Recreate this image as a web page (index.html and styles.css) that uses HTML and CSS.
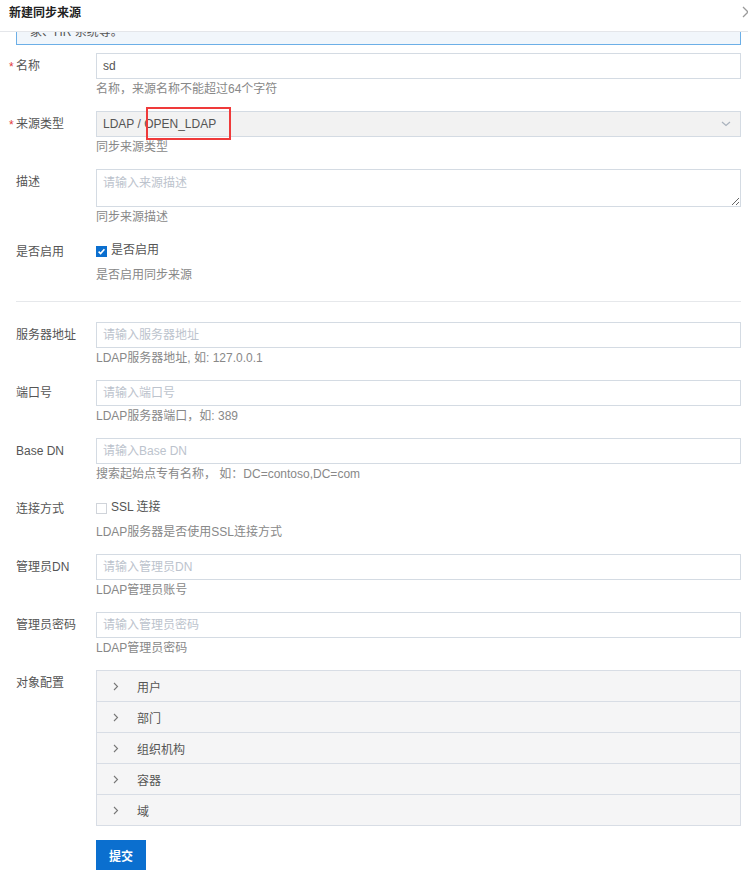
FILE: index.html
```html
<!DOCTYPE html>
<html lang="zh">
<head>
<meta charset="utf-8">
<title>新建同步来源</title>
<link rel="stylesheet" href="styles.css">
</head>
<body>
<div class="dialog">
  <div class="dialog-header">
    <span class="dialog-title">新建同步来源</span>
    <svg class="close-icon" width="8" height="12" viewBox="0 0 8 12"><path d="M1 1 L6 6 L1 11" fill="none" stroke="#9a9a9a" stroke-width="1.3"/></svg>
  </div>
  <div class="dialog-body">
    <div class="alert">同步来源用于从外部目录同步用户、部门等数据，例如 LDAP、Active Directory、钉钉、企业微信、飞书以及自建身份系统、OA 系统、国<br>家、HR 系统等。</div>

    <div class="row">
      <div class="label required">名称</div>
      <div class="field">
        <div class="input">sd</div>
        <div class="help">名称，来源名称不能超过64个字符</div>
      </div>
    </div>

    <div class="row">
      <div class="label required">来源类型</div>
      <div class="field">
        <div class="select">
          <span>LDAP / OPEN_LDAP</span>
          <svg class="select-arrow" width="10" height="6" viewBox="0 0 10 6"><path d="M1 1 L5 4.5 L9 1" fill="none" stroke="#a9b2bd" stroke-width="1.2"/></svg>
          <div class="highlight"></div>
        </div>
        <div class="help">同步来源类型</div>
      </div>
    </div>

    <div class="row">
      <div class="label">描述</div>
      <div class="field">
        <textarea class="textarea" placeholder="请输入来源描述"></textarea>
        <div class="help">同步来源描述</div>
      </div>
    </div>

    <div class="row">
      <div class="label">是否启用</div>
      <div class="field">
        <div class="check-line">
          <span class="checkbox checked"><svg width="11" height="11" viewBox="0 0 11 11"><path d="M2.6 5.6 L4.6 7.6 L8.4 3.2" fill="none" stroke="#fff" stroke-width="1.6"/></svg></span>
          <span class="check-text">是否启用</span>
        </div>
        <div class="help">是否启用同步来源</div>
      </div>
    </div>

    <div class="divider"></div>

    <div class="row">
      <div class="label">服务器地址</div>
      <div class="field">
        <div class="input placeholder">请输入服务器地址</div>
        <div class="help">LDAP服务器地址, 如: 127.0.0.1</div>
      </div>
    </div>

    <div class="row">
      <div class="label">端口号</div>
      <div class="field">
        <div class="input placeholder">请输入端口号</div>
        <div class="help">LDAP服务器端口，如: 389</div>
      </div>
    </div>

    <div class="row">
      <div class="label">Base DN</div>
      <div class="field">
        <div class="input placeholder">请输入Base DN</div>
        <div class="help">搜索起始点专有名称， 如：DC=contoso,DC=com</div>
      </div>
    </div>

    <div class="row">
      <div class="label">连接方式</div>
      <div class="field">
        <div class="check-line">
          <span class="checkbox"></span>
          <span class="check-text">SSL 连接</span>
        </div>
        <div class="help">LDAP服务器是否使用SSL连接方式</div>
      </div>
    </div>

    <div class="row">
      <div class="label">管理员DN</div>
      <div class="field">
        <div class="input placeholder">请输入管理员DN</div>
        <div class="help">LDAP管理员账号</div>
      </div>
    </div>

    <div class="row">
      <div class="label">管理员密码</div>
      <div class="field">
        <div class="input placeholder">请输入管理员密码</div>
        <div class="help">LDAP管理员密码</div>
      </div>
    </div>

    <div class="row">
      <div class="label">对象配置</div>
      <div class="field">
        <div class="collapse">
          <div class="collapse-item"><svg class="arrow" width="6" height="9" viewBox="0 0 6 9"><path d="M1 1 L4.5 4.5 L1 8" fill="none" stroke="#777" stroke-width="1.1"/></svg><span>用户</span></div>
          <div class="collapse-item"><svg class="arrow" width="6" height="9" viewBox="0 0 6 9"><path d="M1 1 L4.5 4.5 L1 8" fill="none" stroke="#777" stroke-width="1.1"/></svg><span>部门</span></div>
          <div class="collapse-item"><svg class="arrow" width="6" height="9" viewBox="0 0 6 9"><path d="M1 1 L4.5 4.5 L1 8" fill="none" stroke="#777" stroke-width="1.1"/></svg><span>组织机构</span></div>
          <div class="collapse-item"><svg class="arrow" width="6" height="9" viewBox="0 0 6 9"><path d="M1 1 L4.5 4.5 L1 8" fill="none" stroke="#777" stroke-width="1.1"/></svg><span>容器</span></div>
          <div class="collapse-item"><svg class="arrow" width="6" height="9" viewBox="0 0 6 9"><path d="M1 1 L4.5 4.5 L1 8" fill="none" stroke="#777" stroke-width="1.1"/></svg><span>域</span></div>
        </div>
      </div>
    </div>

    <div class="actions">
      <button class="btn-primary">提交</button>
    </div>
  </div>
</div>
</body>
</html>
```

FILE: styles.css
```css
* { box-sizing: border-box; }

html, body {
  margin: 0;
  padding: 0;
  background: #fff;
  font-family: "Liberation Sans", "Noto Sans CJK SC", sans-serif;
  font-size: 12px;
  color: #555;
}

.dialog {
  width: 748px;
  height: 872px;
  overflow: hidden;
  display: flex;
  flex-direction: column;
}

.dialog-header {
  height: 32px;
  flex: none;
  border-bottom: 1px solid #e4e6ea;
  display: flex;
  align-items: flex-start;
  justify-content: space-between;
  padding: 5px 0 0 9px;
  position: relative;
  z-index: 1;
  background: #fff;
}

.dialog-title {
  font-weight: bold;
  color: #222;
  font-size: 12px;
  line-height: 16px;
}

.close-icon {
  margin-top: 1px;
  margin-right: -2px;
}

.dialog-body {
  flex: 1;
  overflow: hidden;
  padding: 0 7px 0 16px;
}

.alert {
  margin-top: -32px;
  margin-bottom: 8px;
  border: 1px solid #6cafe7;
  background: #f1f6fb;
  padding: 4px 13px 3px;
  line-height: 18px;
  color: #555;
  white-space: nowrap;
  overflow: hidden;
}

.row {
  display: grid;
  grid-template-columns: 80px 1fr;
  margin-bottom: 14px;
}

.label {
  line-height: 26px;
  color: #555;
  position: relative;
}

.label.required::before {
  content: "*";
  color: #e23b3b;
  position: absolute;
  left: -7px;
  top: 1px;
  font-size: 12px;
}

.field {
  min-width: 0;
}

.input {
  height: 26px;
  border: 1px solid #d4dbe3;
  padding: 0 6px;
  line-height: 24px;
  color: #555;
  background: #fff;
}

.input.placeholder {
  color: #bcc3cd;
}

.select {
  position: relative;
  height: 26px;
  border: 1px solid #d4dbe3;
  background: #f2f2f2;
  padding: 0 6px;
  line-height: 24px;
  color: #555;
  display: flex;
  align-items: center;
  justify-content: space-between;
}

.select-arrow {
  margin-right: 3px;
}

.highlight {
  position: absolute;
  left: 49px;
  top: -5px;
  width: 85px;
  height: 33px;
  border: 2px solid #ef3a3a;
}

.textarea {
  display: block;
  width: 100%;
  height: 38px;
  border: 1px solid #d4dbe3;
  padding: 5px 6px;
  margin: 0;
  font-family: inherit;
  font-size: 12px;
  line-height: 16px;
  color: #555;
  resize: vertical;
  outline: none;
}

.textarea::placeholder {
  color: #bcc3cd;
}

.help {
  line-height: 18px;
  color: #888;
  padding-top: 1px;
  margin-bottom: -1px;
}

.check-line {
  height: 26px;
  display: flex;
  align-items: center;
}

.checkbox {
  width: 11px;
  height: 11px;
  border: 1px solid #d0d4da;
  background: #fff;
  display: inline-flex;
  margin-right: 4px;
  margin-top: -2px;
}

.checkbox.checked {
  background: #0b6fcf;
  border: none;
}

.check-text {
  color: #555;
  line-height: 16px;
  margin-top: -4px;
}

.divider {
  height: 1px;
  background: #e6e8eb;
  margin: 18px 0 20px;
}

.collapse {
  border: 1px solid #d8dde5;
  background: #f5f5f6;
}

.collapse-item {
  height: 31px;
  border-top: 1px solid #d8dde5;
  display: flex;
  align-items: center;
  padding-left: 16px;
  color: #555;
}

.collapse-item:first-child {
  height: 30px;
  border-top: none;
}

.collapse-item .arrow {
  margin-right: 18px;
}

.actions {
  padding-left: 80px;
}

.btn-primary {
  width: 50px;
  height: 30px;
  border: none;
  background: #0b6fcf;
  color: #fff;
  font-family: inherit;
  font-weight: bold;
  font-size: 12px;
  padding: 0;
  margin: 0;
}
```
